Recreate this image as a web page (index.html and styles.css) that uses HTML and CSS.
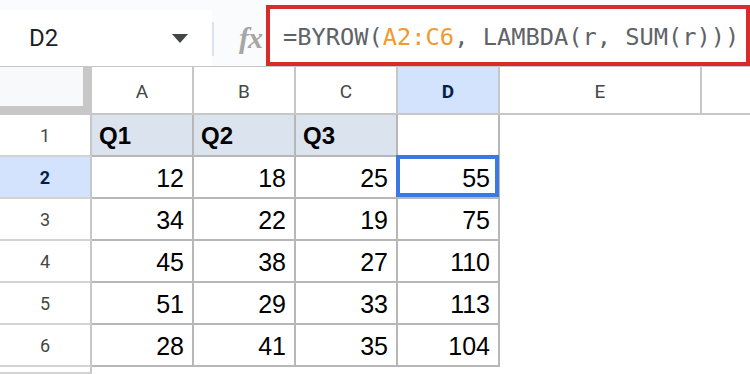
FILE: index.html
```html
<!DOCTYPE html>
<html lang="en">
<head>
    <meta charset="UTF-8">
    <meta name="viewport" content="width=device-width, initial-scale=1.0">
    <title>BYROW - Sheet</title>
    <link rel="stylesheet" href="styles.css">
</head>
<body>
    <div class="toolbar">
        <div class="name-box">
            <span class="cell-ref">D2</span>
            <span class="caret"></span>
        </div>
        <div class="divider"></div>
        <div class="fx">fx</div>
        <div class="formula">=BYROW(<span class="range">A2:C6</span>, LAMBDA(r, SUM(r)))</div>
    </div>

    <div class="sheet">
        <div class="corner"></div>
        <div class="col-head">A</div>
        <div class="col-head">B</div>
        <div class="col-head">C</div>
        <div class="col-head active">D</div>
        <div class="col-head wide">E</div>
        <div class="col-head last"></div>

        <div class="row-head">1</div>
        <div class="cell title">Q1</div>
        <div class="cell title">Q2</div>
        <div class="cell title">Q3</div>
        <div class="cell"></div>
        <div class="blank"></div>
        <div class="blank"></div>

        <div class="row-head active">2</div>
        <div class="cell">12</div>
        <div class="cell">18</div>
        <div class="cell">25</div>
        <div class="cell selected">55</div>
        <div class="blank"></div>
        <div class="blank"></div>

        <div class="row-head">3</div>
        <div class="cell">34</div>
        <div class="cell">22</div>
        <div class="cell">19</div>
        <div class="cell">75</div>
        <div class="blank"></div>
        <div class="blank"></div>

        <div class="row-head">4</div>
        <div class="cell">45</div>
        <div class="cell">38</div>
        <div class="cell">27</div>
        <div class="cell">110</div>
        <div class="blank"></div>
        <div class="blank"></div>

        <div class="row-head">5</div>
        <div class="cell">51</div>
        <div class="cell">29</div>
        <div class="cell">33</div>
        <div class="cell">113</div>
        <div class="blank"></div>
        <div class="blank"></div>

        <div class="row-head">6</div>
        <div class="cell">28</div>
        <div class="cell">41</div>
        <div class="cell">35</div>
        <div class="cell">104</div>
        <div class="blank"></div>
        <div class="blank"></div>

        <div class="row-head"></div>
    </div>
</body>
</html>
```

FILE: styles.css
```css
body {
    margin: 0;
    width: 750px;
    height: 374px;
    overflow: hidden;
    background-color: #ffffff;
    font-family: "Liberation Sans", Arial, sans-serif;
}

/* formula bar */
.toolbar {
    display: flex;
    height: 66px;
    background-color: #f9fbfd;
    border-bottom: 1px solid #c7c7c7;
}

.name-box {
    width: 212px;
    margin-top: 10px;
    background-color: #ffffff;
    display: flex;
    align-items: center;
    padding-left: 29px;
    box-sizing: border-box;
}
.cell-ref {
    font-family: Roboto, sans-serif;
    font-size: 24px;
    color: #1f1f1f;
}
.caret {
    margin-left: auto;
    margin-right: 24px;
    width: 0;
    height: 0;
    border-left: 8px solid transparent;
    border-right: 8px solid transparent;
    border-top: 9px solid #444746;
}

.divider {
    width: 2px;
    height: 34px;
    margin-top: 22px;
    background-color: #dbe4f0;
}

.fx {
    width: 52px;
    padding-left: 25px;
    box-sizing: border-box;
    font-family: "Liberation Serif", serif;
    font-style: italic;
    font-weight: bold;
    font-size: 30px;
    color: #a6a6a6;
    display: flex;
    align-items: center;
    padding-top: 10px;
    letter-spacing: -1px;
}

.formula {
    flex: 1;
    margin-top: 5px;
    border: 4px solid #d92a2a;
    background-color: #ffffff;
    padding: 3px 0 0 13px;
    display: flex;
    align-items: center;
    white-space: pre;
    font-family: "DejaVu Sans Mono", monospace;
    font-size: 23.7px;
    color: #5f6368;
}
.range {
    color: #f29a2e;
}

/* grid */
.sheet {
    display: grid;
    grid-template-columns: 92px 102px 102px 102px 102px 202px 1fr;
    grid-template-rows: 48px repeat(6, 42px) 1fr;
    height: 307px;
}
.sheet > div {
    box-sizing: border-box;
}

.corner {
    background-color: #f8f9fa;
    border-right: 9px solid #c7c7c7;
    border-bottom: 9px solid #c7c7c7;
}

.col-head {
    display: flex;
    align-items: center;
    justify-content: center;
    font-family: Roboto, sans-serif;
    font-size: 19px;
    color: #444746;
    border-right: 2px solid #c7c7c7;
    border-bottom: 2px solid #c7c7c7;
    padding-top: 2px;
}
.col-head.last {
    border-right: none;
}
.col-head.active {
    background-color: #d3e3fd;
    color: #041e49;
    font-weight: bold;
}

.row-head {
    display: flex;
    align-items: center;
    justify-content: center;
    font-family: Roboto, sans-serif;
    font-size: 18px;
    color: #444746;
    border-right: 2px solid #c7c7c7;
    border-bottom: 2px solid #d3d3d3;
}
.row-head.active {
    background-color: #d3e3fd;
    color: #041e49;
    font-weight: bold;
}

.cell {
    display: flex;
    align-items: center;
    justify-content: flex-end;
    padding: 2px 8px 0 8px;
    font-size: 25px;
    color: #000000;
    border-right: 2px solid #b7b7b7;
    border-bottom: 2px solid #b7b7b7;
}
.cell.title {
    justify-content: flex-start;
    padding-left: 7px;
    background-color: #dbe3ee;
    font-weight: bold;
    font-size: 24px;
}
.cell.selected {
    position: relative;
}
.cell.selected::after {
    content: "";
    position: absolute;
    top: -2px;
    left: -2px;
    right: -1px;
    bottom: 0;
    border: 4px solid #3a78e6;
}
```
